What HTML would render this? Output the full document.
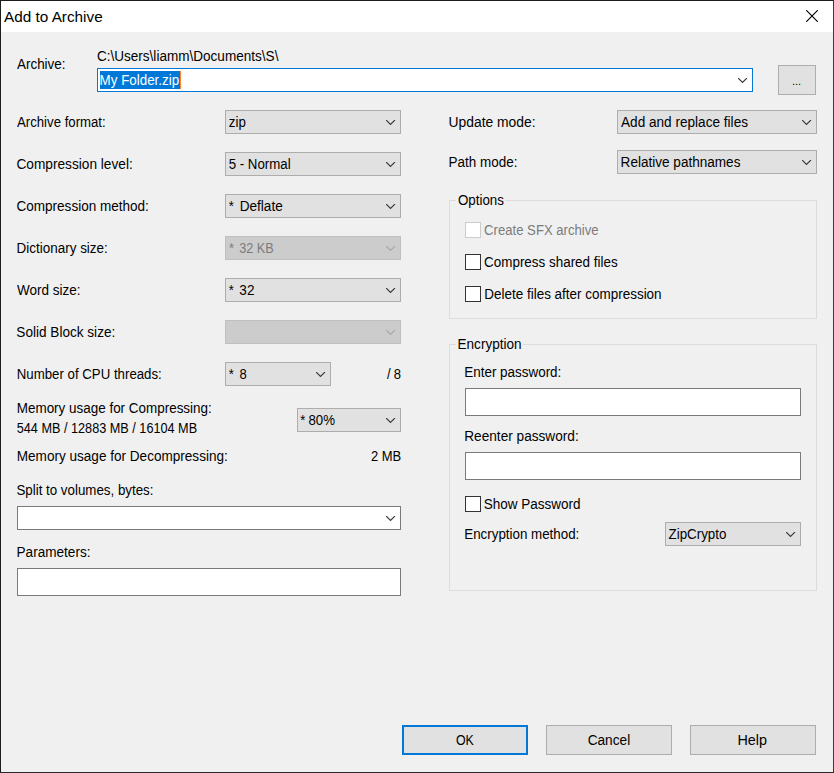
<!DOCTYPE html>
<html lang="en">
<head>
<meta charset="utf-8">
<title>Add to Archive</title>
<style>
html,body{margin:0;padding:0;}
body{width:834px;height:773px;overflow:hidden;background:#f0f0f0;font-family:"Liberation Sans",sans-serif;font-size:14px;color:#000;position:relative;}
#frame{position:absolute;left:0;top:0;width:832px;height:771px;border:1px solid #1c1c1c;border-right-color:#3a3a3a;border-bottom-color:#2a2a2a;z-index:9;pointer-events:none;}
#tbar{position:absolute;left:1px;top:1px;width:832px;height:31px;background:#fff;}
#close{position:absolute;left:806px;top:10px;width:12px;height:12px;}
.t{position:absolute;transform-origin:0 0;white-space:nowrap;line-height:16px;height:16px;z-index:3;}
.combo{position:absolute;box-sizing:border-box;border:1px solid #adadad;background:#e1e1e1;}
.combo.d{background:#cccccc;border-color:#bfbfbf;}
.combo.w{background:#fff;border-color:#7a7a7a;}
.ch{position:absolute;width:10px;height:6px;z-index:2;}
.edit{position:absolute;box-sizing:border-box;border:1px solid #7a7a7a;background:#fff;}
.btn{position:absolute;box-sizing:border-box;border:1px solid #adadad;background:#e1e1e1;}
.grp{position:absolute;box-sizing:border-box;border:1px solid #dcdcdc;}
.gl{position:absolute;background:#f0f0f0;height:3px;z-index:1;}
.cb{position:absolute;box-sizing:border-box;width:16px;height:16px;border:1px solid #333;background:#fff;}
.cb.d{border-color:#cccccc;background:#fff;}
</style>
</head>
<body>
<div id="tbar"></div>
<svg id="close" viewBox="0 0 12 12"><path d="M0.3 0.3 L11.7 11.7 M11.7 0.3 L0.3 11.7" stroke="#000" stroke-width="1.15" fill="none"/></svg>

<div class="combo w" style="left:97px;top:68px;width:656px;height:24px;border-color:#0078d7;"></div><svg class="ch" style="left:738px;top:78px;" viewBox="0 0 10 6"><path d="M0.5 0.5 L4.5 4.5 L8.5 0.5" stroke="#3c3c3c" stroke-width="1.2" stroke-linecap="square" fill="none"/></svg>
<div style="position:absolute;left:100px;top:71px;width:80px;height:18px;background:#0078d7;z-index:1;"></div>
<div style="position:absolute;left:180px;top:71px;width:1px;height:18px;background:#ff8728;z-index:1;"></div>
<div class="btn" style="left:778px;top:65px;width:38px;height:30px;"></div>
<div class="combo " style="left:225px;top:110px;width:176px;height:24px;"></div><svg class="ch" style="left:386px;top:120px;" viewBox="0 0 10 6"><path d="M0.5 0.5 L4.5 4.5 L8.5 0.5" stroke="#3c3c3c" stroke-width="1.2" stroke-linecap="square" fill="none"/></svg>
<div class="combo " style="left:225px;top:152px;width:176px;height:24px;"></div><svg class="ch" style="left:386px;top:162px;" viewBox="0 0 10 6"><path d="M0.5 0.5 L4.5 4.5 L8.5 0.5" stroke="#3c3c3c" stroke-width="1.2" stroke-linecap="square" fill="none"/></svg>
<div class="combo " style="left:225px;top:194px;width:176px;height:24px;"></div><svg class="ch" style="left:386px;top:204px;" viewBox="0 0 10 6"><path d="M0.5 0.5 L4.5 4.5 L8.5 0.5" stroke="#3c3c3c" stroke-width="1.2" stroke-linecap="square" fill="none"/></svg>
<div class="combo d" style="left:225px;top:236px;width:176px;height:24px;"></div><svg class="ch" style="left:386px;top:246px;" viewBox="0 0 10 6"><path d="M0.5 0.5 L4.5 4.5 L8.5 0.5" stroke="#a8a8a8" stroke-width="1.2" stroke-linecap="square" fill="none"/></svg>
<div class="combo " style="left:225px;top:278px;width:176px;height:24px;"></div><svg class="ch" style="left:386px;top:288px;" viewBox="0 0 10 6"><path d="M0.5 0.5 L4.5 4.5 L8.5 0.5" stroke="#3c3c3c" stroke-width="1.2" stroke-linecap="square" fill="none"/></svg>
<div class="combo d" style="left:225px;top:320px;width:176px;height:24px;"></div><svg class="ch" style="left:386px;top:330px;" viewBox="0 0 10 6"><path d="M0.5 0.5 L4.5 4.5 L8.5 0.5" stroke="#a8a8a8" stroke-width="1.2" stroke-linecap="square" fill="none"/></svg>
<div class="combo " style="left:225px;top:362px;width:106px;height:24px;"></div><svg class="ch" style="left:316px;top:372px;" viewBox="0 0 10 6"><path d="M0.5 0.5 L4.5 4.5 L8.5 0.5" stroke="#3c3c3c" stroke-width="1.2" stroke-linecap="square" fill="none"/></svg>
<div class="combo " style="left:297px;top:408px;width:104px;height:24px;"></div><svg class="ch" style="left:386px;top:418px;" viewBox="0 0 10 6"><path d="M0.5 0.5 L4.5 4.5 L8.5 0.5" stroke="#3c3c3c" stroke-width="1.2" stroke-linecap="square" fill="none"/></svg>
<div class="combo w" style="left:17px;top:506px;width:384px;height:24px;"></div><svg class="ch" style="left:386px;top:516px;" viewBox="0 0 10 6"><path d="M0.5 0.5 L4.5 4.5 L8.5 0.5" stroke="#3c3c3c" stroke-width="1.2" stroke-linecap="square" fill="none"/></svg>
<div class="edit" style="left:17px;top:568px;width:384px;height:28px;"></div>
<div class="combo " style="left:617px;top:110px;width:200px;height:24px;"></div><svg class="ch" style="left:802px;top:120px;" viewBox="0 0 10 6"><path d="M0.5 0.5 L4.5 4.5 L8.5 0.5" stroke="#3c3c3c" stroke-width="1.2" stroke-linecap="square" fill="none"/></svg>
<div class="combo " style="left:617px;top:150px;width:200px;height:24px;"></div><svg class="ch" style="left:802px;top:160px;" viewBox="0 0 10 6"><path d="M0.5 0.5 L4.5 4.5 L8.5 0.5" stroke="#3c3c3c" stroke-width="1.2" stroke-linecap="square" fill="none"/></svg>
<div class="grp" style="left:449px;top:200px;width:368px;height:119px;"></div>
<div class="gl" style="left:456px;top:199px;width:49px;"></div>
<div class="grp" style="left:449px;top:344px;width:368px;height:247px;"></div>
<div class="gl" style="left:456px;top:343px;width:67px;"></div>
<div class="cb d" style="left:465px;top:222px;"></div>
<div class="cb" style="left:465px;top:254px;"></div>
<div class="cb" style="left:465px;top:286px;"></div>
<div class="cb" style="left:465px;top:496px;"></div>
<div class="edit" style="left:465px;top:388px;width:336px;height:28px;"></div>
<div class="edit" style="left:465px;top:452px;width:336px;height:28px;"></div>
<div class="combo " style="left:665px;top:522px;width:136px;height:24px;"></div><svg class="ch" style="left:786px;top:532px;" viewBox="0 0 10 6"><path d="M0.5 0.5 L4.5 4.5 L8.5 0.5" stroke="#3c3c3c" stroke-width="1.2" stroke-linecap="square" fill="none"/></svg>
<div class="btn" style="left:402px;top:725px;width:126px;height:30px;border:2px solid #0078d7;"></div>
<div class="btn" style="left:546px;top:725px;width:126px;height:30px;"></div>
<div class="btn" style="left:690px;top:725px;width:126px;height:30px;"></div>
<div class="t" id="title" style="left:4px;top:9px;transform:translateX(0.01px) scaleX(1.0197);font-size:15px;">Add to Archive</div>
<div class="t" id="l_arch" style="left:17px;top:56px;transform:translateX(0.00px) scaleX(0.9596);">Archive:</div>
<div class="t" id="l_path" style="left:96px;top:48px;transform:translateX(0.89px) scaleX(0.9681);">C:\Users\liamm\Documents\S\</div>
<div class="t" id="l_fmt" style="left:17px;top:114px;transform:translateX(0.00px) scaleX(0.9421);">Archive format:</div>
<div class="t" id="l_lvl" style="left:16px;top:156px;transform:translateX(0.48px) scaleX(0.9766);">Compression level:</div>
<div class="t" id="l_mth" style="left:16px;top:198px;transform:translateX(0.48px) scaleX(0.9668);">Compression method:</div>
<div class="t" id="l_dic" style="left:16px;top:240px;transform:translateX(0.55px) scaleX(0.9614);">Dictionary size:</div>
<div class="t" id="l_wrd" style="left:17px;top:282px;transform:translateX(0.00px) scaleX(0.9649);">Word size:</div>
<div class="t" id="l_sol" style="left:16px;top:324px;transform:translateX(0.35px) scaleX(0.9703);">Solid Block size:</div>
<div class="t" id="l_cpu" style="left:16px;top:366px;transform:translateX(0.76px) scaleX(0.9462);">Number of CPU threads:</div>
<div class="t" id="l_cpu8s" style="left:387px;top:366px;transform:translateX(0.03px) scaleX(0.9300);">/</div>
<div class="t" id="l_cpu8" style="left:393px;top:366px;transform:translateX(0.79px) scaleX(0.9300);">8</div>
<div class="t" id="l_mc" style="left:16px;top:400px;transform:translateX(0.76px) scaleX(0.9602);">Memory usage for Compressing:</div>
<div class="t" id="l_mc2" style="left:16px;top:420px;transform:translateX(0.75px) scaleX(0.9053);">544 MB / 12883 MB / 16104 MB</div>
<div class="t" id="l_md" style="left:16px;top:448px;transform:translateX(0.76px) scaleX(0.9687);">Memory usage for Decompressing:</div>
<div class="t" id="l_md2" style="left:370px;top:448px;transform:translateX(0.92px) scaleX(0.9267);">2 MB</div>
<div class="t" id="l_spl" style="left:16px;top:482px;transform:translateX(0.40px) scaleX(0.9521);">Split to volumes, bytes:</div>
<div class="t" id="l_par" style="left:16px;top:544px;transform:translateX(0.55px) scaleX(0.9697);">Parameters:</div>
<div class="t" id="l_upd" style="left:448px;top:114px;transform:translateX(0.53px) scaleX(0.9898);">Update mode:</div>
<div class="t" id="l_pth" style="left:448px;top:154px;transform:translateX(0.60px) scaleX(0.9614);">Path mode:</div>
<div class="t" id="l_c1" style="left:484px;top:222px;transform:translateX(0.08px) scaleX(0.9375);color:#7c7c7c;">Create SFX archive</div>
<div class="t" id="l_c2" style="left:484px;top:254px;transform:translateX(0.08px) scaleX(0.9592);">Compress shared files</div>
<div class="t" id="l_c3" style="left:484px;top:286px;transform:translateX(0.30px) scaleX(0.9614);">Delete files after compression</div>
<div class="t" id="l_ep" style="left:464px;top:364px;transform:translateX(0.26px) scaleX(0.9593);">Enter password:</div>
<div class="t" id="l_rp" style="left:464px;top:428px;transform:translateX(0.26px) scaleX(0.9738);">Reenter password:</div>
<div class="t" id="l_sp" style="left:483px;top:496px;transform:translateX(0.66px) scaleX(0.9646);">Show Password</div>
<div class="t" id="l_em" style="left:464px;top:526px;transform:translateX(0.26px) scaleX(0.9538);">Encryption method:</div>
<div class="t" id="c_fmt" style="left:228px;top:114px;transform:translateX(0.84px) scaleX(0.9509);">zip</div>
<div class="t" id="c_lvl" style="left:228px;top:156px;transform:translateX(0.68px) scaleX(0.9479);">5 - Normal</div>
<div class="t" id="s_mth" style="left:228px;top:198px;transform:translateX(0.64px) scaleX(0.9300);">*</div>
<div class="t" id="c_mth" style="left:239px;top:198px;transform:translateX(0.66px) scaleX(0.9712);">Deflate</div>
<div class="t" id="s_dic" style="left:229px;top:240px;transform:translateX(0.07px) scaleX(0.9300);color:#7c7c7c;">*</div>
<div class="t" id="c_dic" style="left:239px;top:240px;transform:translateX(0.19px) scaleX(0.9052);color:#7c7c7c;">32 KB</div>
<div class="t" id="s_wrd" style="left:228px;top:282px;transform:translateX(0.64px) scaleX(0.9300);">*</div>
<div class="t" id="c_wrd" style="left:239px;top:282px;transform:translateX(0.36px) scaleX(0.9667);">32</div>
<div class="t" id="s_cpu" style="left:228px;top:366px;transform:translateX(0.64px) scaleX(0.9300);">*</div>
<div class="t" id="c_cpu" style="left:239px;top:366px;transform:translateX(0.46px) scaleX(0.9300);">8</div>
<div class="t" id="s_mem" style="left:300px;top:412px;transform:translateX(0.30px) scaleX(0.9300);">*</div>
<div class="t" id="c_mem" style="left:308px;top:412px;transform:translateX(0.47px) scaleX(0.9457);">80%</div>
<div class="t" id="c_upd" style="left:621px;top:114px;transform:translateX(0.00px) scaleX(0.9712);">Add and replace files</div>
<div class="t" id="c_pth" style="left:620px;top:154px;transform:translateX(0.60px) scaleX(0.9685);">Relative pathnames</div>
<div class="t" id="c_enc" style="left:668px;top:526px;transform:translateX(0.53px) scaleX(0.9543);">ZipCrypto</div>
<div class="t" id="g_opt" style="left:457px;top:192px;transform:translateX(0.92px) scaleX(0.9530);">Options</div>
<div class="t" id="g_enc" style="left:457px;top:336px;transform:translateX(0.56px) scaleX(0.9671);">Encryption</div>
<div class="t" id="b_dots" style="left:791px;top:73px;transform:translateX(0.90px) scaleX(1.0000);font-size:11px;">...</div>
<div class="t" id="b_ok" style="left:455px;top:732px;transform:translateX(0.99px) scaleX(0.8843);">OK</div>
<div class="t" id="b_cancel" style="left:587px;top:732px;transform:translateX(0.64px) scaleX(0.9761);">Cancel</div>
<div class="t" id="b_help" style="left:737px;top:732px;transform:translateX(0.41px) scaleX(1.0261);">Help</div>
<div class="t" id="c_arch" style="left:99px;top:72px;transform:translateX(0.62px) scaleX(0.9544);color:#fff;">My Folder.zip</div>
<div id="frame"></div>
</body>
</html>
